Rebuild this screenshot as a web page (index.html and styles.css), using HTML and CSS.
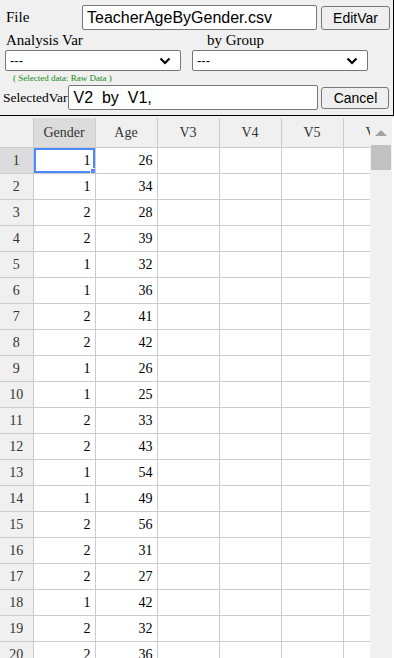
FILE: index.html
```html
<!DOCTYPE html>
<html lang="en">
<head>
    <meta charset="UTF-8">
    <meta name="viewport" content="width=device-width, initial-scale=1.0">
    <title>Data Sheet</title>
    <link rel="stylesheet" href="styles.css">
</head>
<body>
    <!-- Top control panel -->
    <div class="panel">
        <div class="line line-file">
            <label class="lbl lbl-file" for="fileName">File</label>
            <input type="text" id="fileName" class="txt txt-file" value="TeacherAgeByGender.csv">
            <button class="btn btn-edit">EditVar</button>
        </div>

        <div class="line line-heads">
            <span class="lbl lbl-var">Analysis Var</span>
            <span class="lbl lbl-group">by Group</span>
        </div>

        <!-- Dropdowns drawn by hand so the chevron matches -->
        <div class="line line-selects">
            <div class="sel">
                <span class="sel-text">---</span>
                <svg class="chev" width="12" height="8" viewBox="0 0 12 8">
                    <path d="M1.5 1.5 L6 6 L10.5 1.5" fill="none" stroke="#000" stroke-width="2.2"/>
                </svg>
            </div>
            <div class="sel">
                <span class="sel-text">---</span>
                <svg class="chev" width="12" height="8" viewBox="0 0 12 8">
                    <path d="M1.5 1.5 L6 6 L10.5 1.5" fill="none" stroke="#000" stroke-width="2.2"/>
                </svg>
            </div>
        </div>

        <div class="note">( Selected data: Raw Data )</div>

        <div class="line line-selvar">
            <label class="lbl lbl-selvar" for="selVar">SelectedVar</label>
            <input type="text" id="selVar" class="txt txt-selvar" value="V2  by  V1,">
            <button class="btn btn-cancel">Cancel</button>
        </div>
    </div>

    <!-- Spreadsheet -->
    <div class="sheet">
        <div class="sheet-body">
            <table class="grid">
                <colgroup>
                    <col class="c-row">
                    <col class="c-data"><col class="c-data"><col class="c-data">
                    <col class="c-data"><col class="c-data"><col class="c-data">
                </colgroup>
                <thead>
                    <tr>
                        <th class="corner"></th>
                        <th class="hd-active">Gender</th>
                        <th>Age</th>
                        <th>V3</th>
                        <th>V4</th>
                        <th>V5</th>
                        <th>V6</th>
                    </tr>
                </thead>
                <tbody id="rows"></tbody>
            </table>
        </div>

        <!-- Vertical scrollbar -->
        <div class="vscroll">
            <div class="vscroll-up"></div>
            <div class="vscroll-thumb"></div>
        </div>
    </div>

    <script>
        var data = [
            [1, 26], [1, 34], [2, 28], [2, 39], [1, 32],
            [1, 36], [2, 41], [2, 42], [1, 26], [1, 25],
            [2, 33], [2, 43], [1, 54], [1, 49], [2, 56],
            [2, 31], [2, 27], [1, 42], [2, 32], [2, 36]
        ];

        var body = document.getElementById("rows");
        var html = "";
        for (var i = 0; i < data.length; i++) {
            var rowCls = i === 0 ? ' class="rh rh-active"' : ' class="rh"';
            var firstCls = i === 0 ? ' class="cell-active"' : '';
            html += "<tr>" +
                "<th" + rowCls + ">" + (i + 1) + "</th>" +
                "<td" + firstCls + ">" + data[i][0] +
                (i === 0 ? '<span class="handle"></span>' : '') + "</td>" +
                "<td>" + data[i][1] + "</td>" +
                "<td></td><td></td><td></td><td></td>" +
                "</tr>";
        }
        body.innerHTML = html;
    </script>
</body>
</html>
```

FILE: styles.css
```css
/* Page */
body {
    margin: 0;
    background: #f0f0f0;
    font-family: "Liberation Serif", "Times New Roman", serif;
    width: 394px;
    height: 658px;
    overflow: hidden;
}

/* Top control panel */
.panel {
    height: 116px;
    border-right: 1px solid #000;
    border-bottom: 1px solid #000;
    box-sizing: border-box;
    width: 394px;
    padding-top: 5px;
}

.line {
    display: flex;
    align-items: center;
}

.lbl {
    font-size: 15px;
    color: #000;
    flex-shrink: 0;
}

.line-file {
    height: 25px;
}

.lbl-file {
    width: 76px;
    padding-left: 6px;
}

.txt {
    box-sizing: border-box;
    height: 25px;
    border: 1px solid #767676;
    border-radius: 2px;
    background: #fff;
    font-family: "Liberation Sans", Arial, sans-serif;
    font-size: 16px;
    padding: 0 4px;
    color: #000;
}

.txt-file {
    width: 235px;
}

.btn {
    box-sizing: border-box;
    height: 24px;
    border: 1px solid #767676;
    border-radius: 3px;
    background: #efefef;
    font-family: "Liberation Sans", Arial, sans-serif;
    font-size: 14px;
    color: #000;
    padding: 0;
}

.btn-edit {
    width: 69px;
    margin-left: 4px;
}

.line-heads {
    height: 19px;
    margin-top: 1px;
}

.lbl-var {
    width: 201px;
    padding-left: 6px;
}

.line-selects {
    padding-left: 5px;
    gap: 11px;
}

.sel {
    box-sizing: border-box;
    width: 176px;
    height: 21px;
    border: 1px solid #767676;
    border-radius: 2px;
    background: #fff;
    display: flex;
    align-items: center;
    justify-content: space-between;
    padding: 0 9px 0 4px;
}

.sel-text {
    font-family: "Liberation Sans", Arial, sans-serif;
    font-size: 13px;
    color: #000;
}

.chev {
    display: block;
}

.note {
    font-size: 9px;
    color: #138a13;
    padding-left: 13px;
    height: 14px;
    line-height: 14px;
}

.line-selvar {
    height: 25px;
}

.lbl-selvar {
    font-size: 13.5px;
    padding-left: 3px;
    margin-right: 1px;
}

.txt-selvar {
    width: 250px;
    white-space: pre;
}

.btn-cancel {
    width: 68px;
    height: 22px;
    margin-left: 3px;
}

/* Spreadsheet */
.sheet {
    display: flex;
    margin-top: 2px;
    height: 540px;
    background: #fff;
}

.sheet-body {
    width: 370px;
    overflow: hidden;
}

.grid {
    border-collapse: collapse;
    table-layout: fixed;
    width: 405px;
    font-size: 14px;
}

.c-row {
    width: 33px;
}

.c-data {
    width: 62px;
}

.grid th,
.grid td {
    border: 1px solid #ccc;
    height: 25px;
    padding: 0;
    overflow: hidden;
    white-space: nowrap;
}

.grid thead th {
    height: 29px;
    border-top: none;
    background: #f0f0f0;
    font-weight: normal;
    color: #333;
}

.grid thead th.hd-active,
.grid th.rh-active {
    background: #dcdcdc;
}

.grid th:first-child {
    border-left: none;
}

.rh {
    background: #f0f0f0;
    font-weight: normal;
    color: #333;
    font-size: 14px;
}

.grid td {
    text-align: right;
    padding-right: 4px;
    color: #000;
}

/* Active cell */
.cell-active {
    position: relative;
    box-shadow: inset 0 0 0 2px #4b89ff;
}

.handle {
    position: absolute;
    right: -3px;
    bottom: -3px;
    width: 6px;
    height: 6px;
    background: #4b89ff;
    border: 1px solid #fff;
}

/* Scrollbar */
.vscroll {
    width: 22px;
    background: #f0f0f0;
    border-right: 2px solid #fff;
}

.vscroll-up {
    width: 0;
    height: 0;
    margin: 12px auto 0;
    border-left: 6px solid transparent;
    border-right: 6px solid transparent;
    border-bottom: 6px solid #a3a3a3;
}

.vscroll-thumb {
    height: 25px;
    margin: 9px 1px 0;
    background: #c1c1c1;
}
```
